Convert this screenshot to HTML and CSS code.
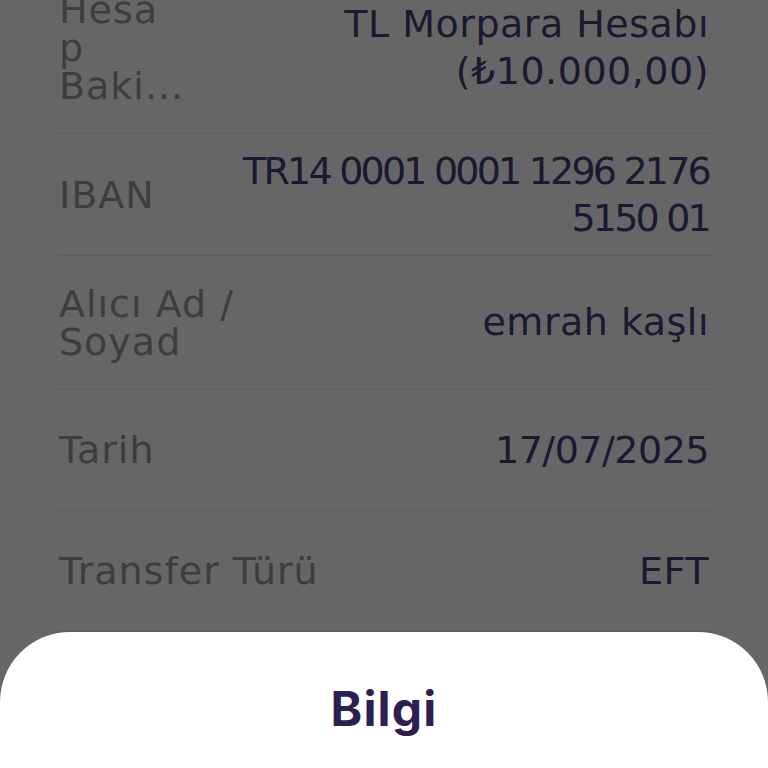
FILE: index.html
```html
<!DOCTYPE html>
<html lang="tr">
<head>
    <meta charset="UTF-8">
    <meta name="viewport" content="width=device-width, initial-scale=1.0">
    <title>Transfer Detayı</title>
    <link rel="stylesheet" href="styles.css">
</head>
<body>
    <div id="details">
        <div class="row">
            <div class="label">Hesa<br>p<br>Baki...</div>
            <div class="value">TL Morpara Hesabı<br>(₺10.000,00)</div>
        </div>
        <div class="row">
            <div class="label">IBAN</div>
            <div class="value digits">TR14 0001 0001 1296 2176<br>5150 01</div>
        </div>
        <div class="row">
            <div class="label">Alıcı Ad /<br>Soyad</div>
            <div class="value">emrah kaşlı</div>
        </div>
        <div class="row">
            <div class="label">Tarih</div>
            <div class="value date">17/07/2025</div>
        </div>
        <div class="row">
            <div class="label">Transfer Türü</div>
            <div class="value">EFT</div>
        </div>
    </div>

    <!-- dimmed backdrop behind the sheet -->
    <div id="scrim"></div>

    <div id="sheet">
        <h2 id="sheet-title">Bilgi</h2>
    </div>
</body>
</html>
```

FILE: styles.css
```css
body {
    margin: 0;
    height: 100vh;
    overflow: hidden;
    background-color: #ffffff;
    font-family: "DejaVu Sans", sans-serif;
}

#details {
    margin-top: -38px;
    padding: 0 56px 0 57px;
}

.row {
    display: flex;
    justify-content: space-between;
    align-items: center;
    gap: 20px;
    box-sizing: border-box;
    min-height: 121px;
    padding: 14px 0;
    border-bottom: 1px solid #eeeeee;
}

.label {
    padding: 14.5px 0 14.5px 2px;
    font-size: 38px;
    line-height: 38px;
    letter-spacing: 1px;
    color: #999999;
    white-space: nowrap;
}

.value {
    font-size: 38px;
    line-height: 46.5px;
    letter-spacing: 0.5px;
    color: #463e78;
    text-align: right;
    white-space: nowrap;
    padding-right: 3px;
}

.digits {
    letter-spacing: -2.8px;
}

.date {
    letter-spacing: -0.5px;
}

#scrim {
    position: fixed;
    top: 0;
    left: 0;
    right: 0;
    bottom: 0;
    background-color: rgba(0, 0, 0, 0.6);
}

#sheet {
    position: fixed;
    top: 632px;
    left: 0;
    right: 0;
    bottom: 0;
    background-color: #ffffff;
    border-radius: 70px 70px 0 0;
    text-align: center;
}

#sheet-title {
    margin: 0;
    padding-top: 48px;
    font-family: Inter, "Liberation Sans", sans-serif;
    font-size: 48px;
    font-weight: 700;
    line-height: 58px;
    letter-spacing: 1.2px;
    color: #2d1f50;
}
```
